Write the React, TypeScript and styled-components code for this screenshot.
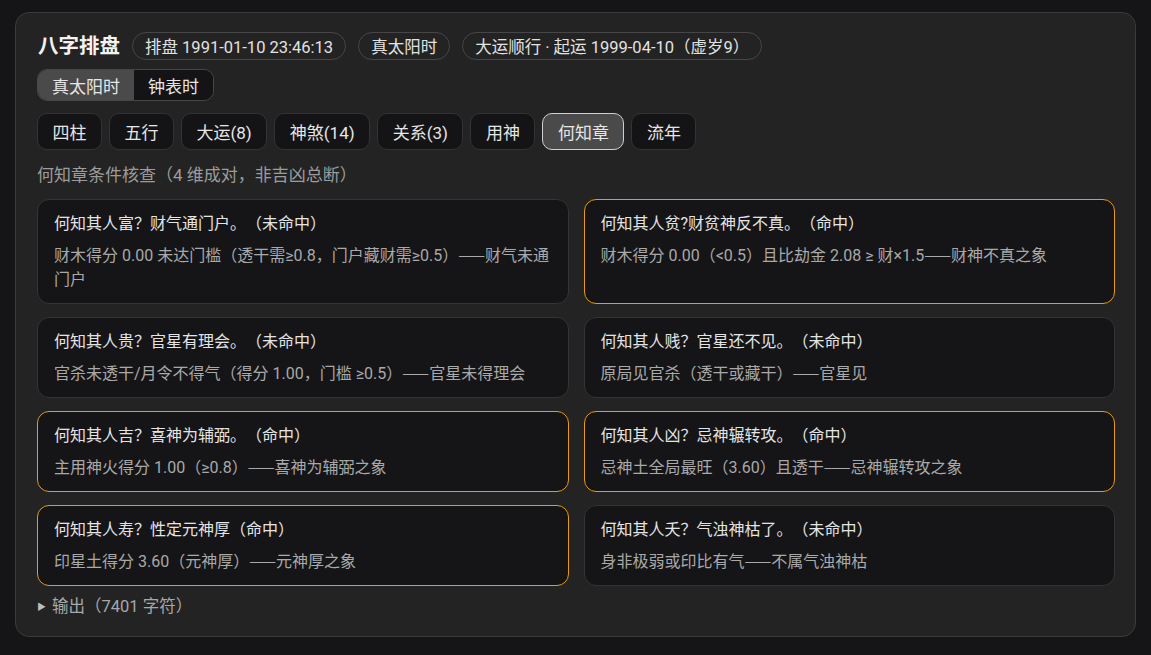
import React from "react";
import styled, { createGlobalStyle } from "styled-components";

const Global = createGlobalStyle`
  html, body { margin: 0; padding: 0; background: #151517; }
  body {
    font-family: "Roboto", "Noto Sans CJK SC", sans-serif;
    color: #e6e6e6;
    text-spacing-trim: space-all;
  }
  * { box-sizing: border-box; }
`;

const Page = styled.div`
  padding: 12px 15px 19px 15px;
`;

const Panel = styled.section`
  background: #232323;
  border: 1px solid #3b3b3b;
  border-radius: 14px;
  padding: 17px 20px 17px 21px;
`;

const Header = styled.div`
  display: flex;
  align-items: center;
  gap: 12px;
`;

const Title = styled.h1`
  margin: 0;
  font-size: 20.5px;
  font-weight: 700;
  color: #f2f2f2;
  line-height: 32px;
  padding-left: 1px;
`;

const Pill = styled.span`
  display: inline-flex;
  align-items: center;
  height: 28px;
  padding: 0 12px;
  border: 1px solid #464646;
  border-radius: 999px;
  font-size: 16.5px;
  color: #e2e2e2;
  white-space: nowrap;
`;

const Toggle = styled.div`
  display: inline-flex;
  margin-top: 7px;
  border: 1px solid #464646;
  border-radius: 10px;
  overflow: hidden;
`;

const Seg = styled.button<{ $active?: boolean }>`
  all: unset;
  height: 30px;
  padding: 0 14px;
  display: flex;
  align-items: center;
  font-family: inherit;
  font-size: 17px;
  color: #e6e6e6;
  background: ${(p) => (p.$active ? "#4a4a4a" : "#141416")};
`;

const Tabs = styled.div`
  display: flex;
  gap: 7px;
  margin-top: 12px;
`;

const Tab = styled.button<{ $active?: boolean }>`
  all: unset;
  height: 35px;
  padding: 0 14.5px;
  display: flex;
  align-items: center;
  font-family: inherit;
  font-size: 17px;
  border-radius: 10px;
  color: #e6e6e6;
  background: ${(p) => (p.$active ? "#4a4a4a" : "#141416")};
  border: 1px solid ${(p) => (p.$active ? "#cfcfcf" : "#333335")};
`;

const Caption = styled.div`
  margin-top: 13px;
  font-size: 17px;
  line-height: 24px;
  color: #9c9c9c;
`;

const Grid = styled.div`
  display: grid;
  grid-template-columns: 1fr 1fr;
  column-gap: 15px;
  row-gap: 13px;
  margin-top: 12px;
`;

const Card = styled.div<{ $hit?: boolean }>`
  background: #151517;
  border: 1px solid ${(p) => (p.$hit ? "#e89a14" : "#343436")};
  border-radius: 12px;
  padding: 12px 16px 11px 16px;
`;

const CardTitle = styled.div`
  font-size: 16px;
  line-height: 24px;
  color: #e4e4e4;
`;

const CardDetail = styled.div`
  margin-top: 8px;
  font-size: 16px;
  line-height: 24px;
  color: #a9a9a9;
`;

const Dash = styled.span`
  font-family: "Noto Sans CJK SC", sans-serif;
  line-height: 0;
`;

const Footer = styled.div`
  margin-top: 9px;
  display: flex;
  align-items: center;
  gap: 6px;
  font-size: 16.5px;
  line-height: 24px;
  color: #a8a8a8;
`;

const Arrow = styled.span`
  font-size: 9px;
  color: #bdbdbd;
`;

const items: { t: string; d: string; hit: boolean }[] = [
  { t: "何知其人富？财气通门户。（未命中）", d: "财木得分 0.00 未达门槛（透干需≥0.8，门户藏财需≥0.5）——财气未通门户", hit: false },
  { t: "何知其人贫?财贫神反不真。（命中）", d: "财木得分 0.00（<0.5）且比劫金 2.08 ≥ 财×1.5——财神不真之象", hit: true },
  { t: "何知其人贵？官星有理会。（未命中）", d: "官杀未透干/月令不得气（得分 1.00，门槛 ≥0.5）——官星未得理会", hit: false },
  { t: "何知其人贱？官星还不见。（未命中）", d: "原局见官杀（透干或藏干）——官星见", hit: false },
  { t: "何知其人吉？喜神为辅弼。（命中）", d: "主用神火得分 1.00（≥0.8）——喜神为辅弼之象", hit: true },
  { t: "何知其人凶？忌神辗转攻。（命中）", d: "忌神土全局最旺（3.60）且透干——忌神辗转攻之象", hit: true },
  { t: "何知其人寿？性定元神厚（命中）", d: "印星土得分 3.60（元神厚）——元神厚之象", hit: true },
  { t: "何知其人夭？气浊神枯了。（未命中）", d: "身非极弱或印比有气——不属气浊神枯", hit: false },
];

const tabs = ["四柱", "五行", "大运(8)", "神煞(14)", "关系(3)", "用神", "何知章", "流年"];

function Detail({ text }: { text: string }) {
  const [a, b] = text.split("——");
  return (
    <CardDetail>
      {a}
      <Dash>——</Dash>
      {b}
    </CardDetail>
  );
}

export default function App() {
  return (
    <Page>
      <Global />
      <Panel>
        <Header>
          <Title>八字排盘</Title>
          <Pill>排盘 1991-01-10 23:46:13</Pill>
          <Pill>真太阳时</Pill>
          <Pill>大运顺行 · 起运 1999-04-10（虚岁9）</Pill>
        </Header>
        <Toggle>
          <Seg $active>真太阳时</Seg>
          <Seg>钟表时</Seg>
        </Toggle>
        <Tabs>
          {tabs.map((t) => (
            <Tab key={t} $active={t === "何知章"}>
              {t}
            </Tab>
          ))}
        </Tabs>
        <Caption>何知章条件核查（4 维成对，非吉凶总断）</Caption>
        <Grid>
          {items.map((it) => (
            <Card key={it.t} $hit={it.hit}>
              <CardTitle>{it.t}</CardTitle>
              <Detail text={it.d} />
            </Card>
          ))}
        </Grid>
        <Footer>
          <Arrow>▶</Arrow>
          <span>输出（7401 字符）</span>
        </Footer>
      </Panel>
    </Page>
  );
}
